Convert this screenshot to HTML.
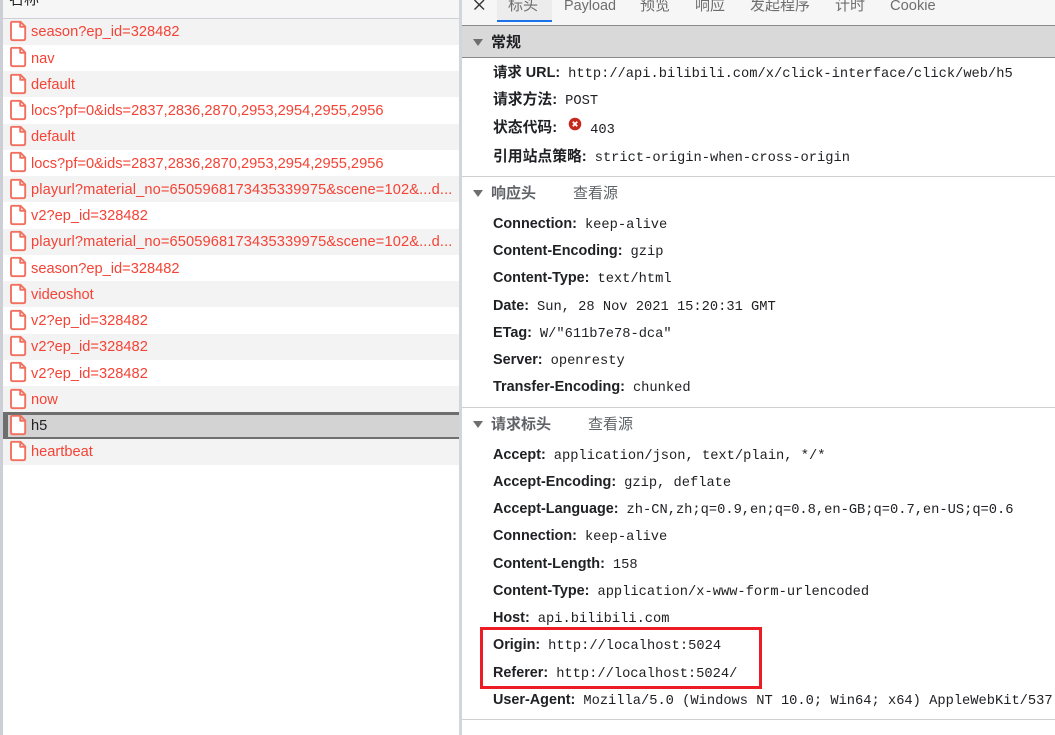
<!DOCTYPE html>
<html><head><meta charset="utf-8"><style>
html,body{margin:0;padding:0;background:#fff}
#p{position:relative;width:1055px;height:735px;overflow:hidden;background:#fff;font-family:"Liberation Sans","Noto Sans CJK SC",sans-serif}
.a{position:absolute}
.r{position:absolute;left:3px;width:456px;height:26px}
.s{background:#f3f3f3}
.n{position:absolute;left:31px;font-size:14.65px;line-height:20px;color:#f44336;white-space:nowrap}
.k{position:absolute;left:493px;font-size:14.4px;line-height:20px;font-weight:bold;color:#202124;white-space:nowrap}
.c{font-size:14.8px}
.k span{font-family:"Liberation Mono",monospace;font-weight:normal;font-size:13.73px;margin-left:8px;position:relative}
.h{position:absolute;font-size:15px;line-height:20px;color:#5f6368;white-space:nowrap}
.tab{position:absolute;top:-4px;font-size:14.4px;line-height:20px;color:#6e6e6e;white-space:nowrap}
.z{font-size:15px}
.tri{position:absolute;left:473px;width:0;height:0;border-left:5.5px solid transparent;border-right:5.5px solid transparent;border-top:7px solid #6e6e6e}
.l{position:absolute;left:462px;right:0;height:1px;background:#d0d0d0}
</style></head><body><div id="p">
<div class="a" style="left:0;top:0;width:3px;height:735px;background:#ccd0d6"></div>
<div class="a" style="left:3px;top:0;width:456px;height:18px;background:#f6f6f6;border-bottom:1px solid #ccd0d6"></div>
<div class="a" style="left:9px;top:-10px;font-size:15px;line-height:20px;color:#202124">名称</div>
<div class="a" style="left:459px;top:0;width:3px;height:735px;background:#d2d5d9"></div>

<div class="r s" style="top:19px"></div>
<div class="r s" style="top:71px"></div>
<div class="r s" style="top:124px"></div>
<div class="r s" style="top:176px"></div>
<div class="r s" style="top:229px"></div>
<div class="r s" style="top:281px"></div>
<div class="r s" style="top:334px"></div>
<div class="r s" style="top:386px"></div>
<div class="a" style="left:3px;top:412px;width:451px;height:22px;background:#d3d3d3;border:solid #6e6e6e;border-width:3px 0 3px 5px"></div>
<div class="r s" style="top:439px"></div>

<svg class="a" style="left:0;top:0" width="30" height="470" fill="#fff" stroke="#f2705f" stroke-width="1.9" stroke-linejoin="round">
<defs><path id="f" d="M11.5 0.8H20.5L25.2 5.5V17.2Q25.2 19.2 23.2 19.2H13Q11 19.2 11 17.2V1.5ZM20.2 1V5.8H25"/></defs>
<use href="#f" y="21"/><use href="#f" y="47"/><use href="#f" y="74"/><use href="#f" y="100"/><use href="#f" y="126"/><use href="#f" y="152"/><use href="#f" y="179"/><use href="#f" y="205"/><use href="#f" y="231"/><use href="#f" y="257"/><use href="#f" y="284"/><use href="#f" y="310"/><use href="#f" y="336"/><use href="#f" y="362"/><use href="#f" y="389"/><use href="#f" y="415"/><use href="#f" y="441"/>
</svg>

<div class="n" style="top:22px">season?ep_id=328482</div>
<div class="n" style="top:49px">nav</div>
<div class="n" style="top:75px">default</div>
<div class="n" style="top:101px">locs?pf=0&amp;ids=2837,2836,2870,2953,2954,2955,2956</div>
<div class="n" style="top:127px">default</div>
<div class="n" style="top:154px">locs?pf=0&amp;ids=2837,2836,2870,2953,2954,2955,2956</div>
<div class="n" style="top:180px;letter-spacing:.11px">playurl?material_no=6505968173435339975&amp;scene=102&amp;...d...</div>
<div class="n" style="top:206px">v2?ep_id=328482</div>
<div class="n" style="top:232px;letter-spacing:.11px">playurl?material_no=6505968173435339975&amp;scene=102&amp;...d...</div>
<div class="n" style="top:259px">season?ep_id=328482</div>
<div class="n" style="top:285px">videoshot</div>
<div class="n" style="top:311px">v2?ep_id=328482</div>
<div class="n" style="top:337px">v2?ep_id=328482</div>
<div class="n" style="top:364px">v2?ep_id=328482</div>
<div class="n" style="top:390px">now</div>
<div class="n" style="top:416px;color:#202124">h5</div>
<div class="n" style="top:442px">heartbeat</div>

<div class="a" style="left:462px;top:0;width:593px;height:25px;background:#f6f6f6;border-bottom:1px solid #8a8a8a"></div>
<div class="a" style="left:497px;top:0;width:55px;height:20px;background:#ececec;border-bottom:2px solid #1a73e8"></div>
<svg class="a" style="left:473px;top:0" width="13" height="11" stroke="#333" stroke-width="1.4" fill="none"><path d="M1.5 0L11 9.5M11 0L1.5 9.5"/></svg>
<div class="tab z" style="left:508px">标头</div>
<div class="tab" style="left:564px">Payload</div>
<div class="tab z" style="left:640px">预览</div>
<div class="tab z" style="left:695px">响应</div>
<div class="tab z" style="left:750px">发起程序</div>
<div class="tab z" style="left:835px">计时</div>
<div class="tab" style="left:890px;font-size:14.7px">Cookie</div>

<div class="a" style="left:462px;top:26px;width:593px;height:31px;background:#d9d9d9;border-bottom:1px solid #8a8a8a"></div>
<div class="tri" style="top:39px"></div>
<div class="h" style="left:491px;top:33px;color:#202124;font-weight:bold">常规</div>

<div class="k" style="top:63px">请求 URL:<span>http://api.bilibili.com/x/click-interface/click/web/h5</span></div>
<div class="k c" style="top:90px">请求方法:<span>POST</span></div>
<div class="k c" style="top:118px">状态代码:<span style="margin-left:33px;top:1px">403</span></div>
<svg class="a" style="left:568px;top:117px" width="14" height="14"><circle cx="7" cy="7" r="6.3" fill="#c5281c"/><path d="M4.8 4.8L9.2 9.2M9.2 4.8L4.8 9.2" stroke="#fff" stroke-width="1.8"/></svg>
<div class="k c" style="top:147px">引用站点策略:<span>strict-origin-when-cross-origin</span></div>

<div class="l" style="top:176px"></div>
<div class="tri" style="top:190px"></div>
<div class="h" style="left:491px;top:184px;font-weight:bold">响应头</div>
<div class="h" style="left:573px;top:184px">查看源</div>
<div class="k" style="top:214px">Connection:<span>keep-alive</span></div>
<div class="k" style="top:241px">Content-Encoding:<span>gzip</span></div>
<div class="k" style="top:268px">Content-Type:<span>text/html</span></div>
<div class="k" style="top:296px">Date:<span>Sun, 28 Nov 2021 15:20:31 GMT</span></div>
<div class="k" style="top:323px">ETag:<span>W/"611b7e78-dca"</span></div>
<div class="k" style="top:350px">Server:<span>openresty</span></div>
<div class="k" style="top:377px">Transfer-Encoding:<span>chunked</span></div>

<div class="l" style="top:407px"></div>
<div class="tri" style="top:421px"></div>
<div class="h" style="left:491px;top:415px;font-weight:bold">请求标头</div>
<div class="h" style="left:588px;top:415px">查看源</div>
<div class="k" style="top:445px">Accept:<span>application/json, text/plain, */*</span></div>
<div class="k" style="top:472px">Accept-Encoding:<span>gzip, deflate</span></div>
<div class="k" style="top:499px">Accept-Language:<span>zh-CN,zh;q=0.9,en;q=0.8,en-GB;q=0.7,en-US;q=0.6</span></div>
<div class="k" style="top:526px">Connection:<span>keep-alive</span></div>
<div class="k" style="top:554px">Content-Length:<span>158</span></div>
<div class="k" style="top:581px">Content-Type:<span>application/x-www-form-urlencoded</span></div>
<div class="k" style="top:608px">Host:<span>api.bilibili.com</span></div>
<div class="k" style="top:635px">Origin:<span>http://localhost:5024</span></div>
<div class="k" style="top:663px">Referer:<span>http://localhost:5024/</span></div>
<div class="k" style="top:690px">User-Agent:<span>Mozilla/5.0 (Windows NT 10.0; Win64; x64) AppleWebKit/537.36</span></div>
<div class="l" style="top:719px"></div>

<div class="a" style="left:480px;top:627px;width:276px;height:56px;border:3px solid #ed1c24"></div>
</div></body></html>
